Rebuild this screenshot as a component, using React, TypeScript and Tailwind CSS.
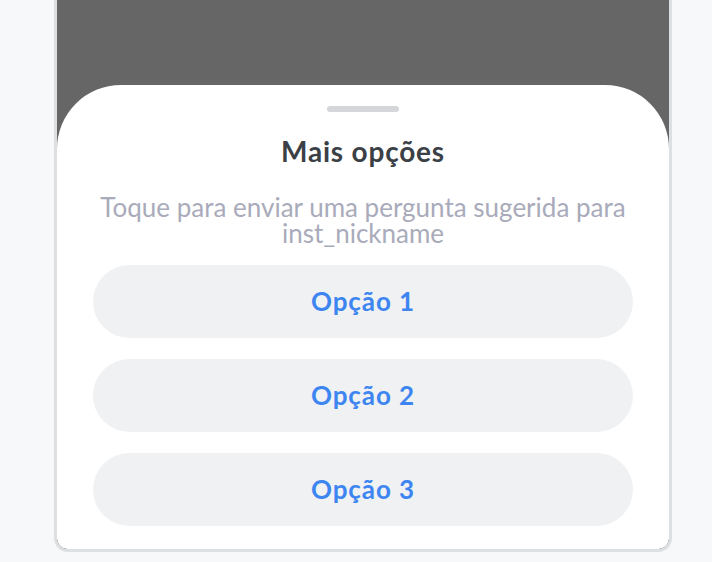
import React from "react";

export default function App() {
  const options = ["Opção 1", "Opção 2", "Opção 3"];
  return (
    <div className="w-[712px] h-[562px] bg-[#f7f8fa] overflow-hidden" style={{ fontFamily: "Lato, 'Noto Sans', sans-serif" }}>
      <div className="ml-[54px] w-[618px] h-[552px] border-x-[3px] border-b-[3px] border-[#dce0e2] rounded-b-[14px] bg-[#666666] flex flex-col overflow-hidden">
        <div className="h-[85px] shrink-0" />
        <div className="flex-1 bg-white rounded-t-[64px] rounded-b-[10px] flex flex-col items-center pt-[21px]">
          <div className="w-[72px] h-[6px] rounded-full bg-[#d5d6da]" />
          <div className="mt-[22px] text-[28px] leading-[34px] font-bold tracking-[0.8px] text-[#3b3f46]">Mais opções</div>
          <div className="mt-[26px] text-[26px] leading-[26px] text-[#a9abbb] text-center px-[20px]">
            Toque para enviar uma pergunta sugerida para inst_nickname
          </div>
          <div className="mt-[19px] w-[540px] flex flex-col gap-[21px]">
            {options.map((o) => (
              <div key={o} className="h-[73px] rounded-full bg-[#f0f1f3] flex items-center justify-center text-[26px] font-bold tracking-[0.9px] text-[#3d85f0]">
                {o}
              </div>
            ))}
          </div>
        </div>
      </div>
    </div>
  );
}
